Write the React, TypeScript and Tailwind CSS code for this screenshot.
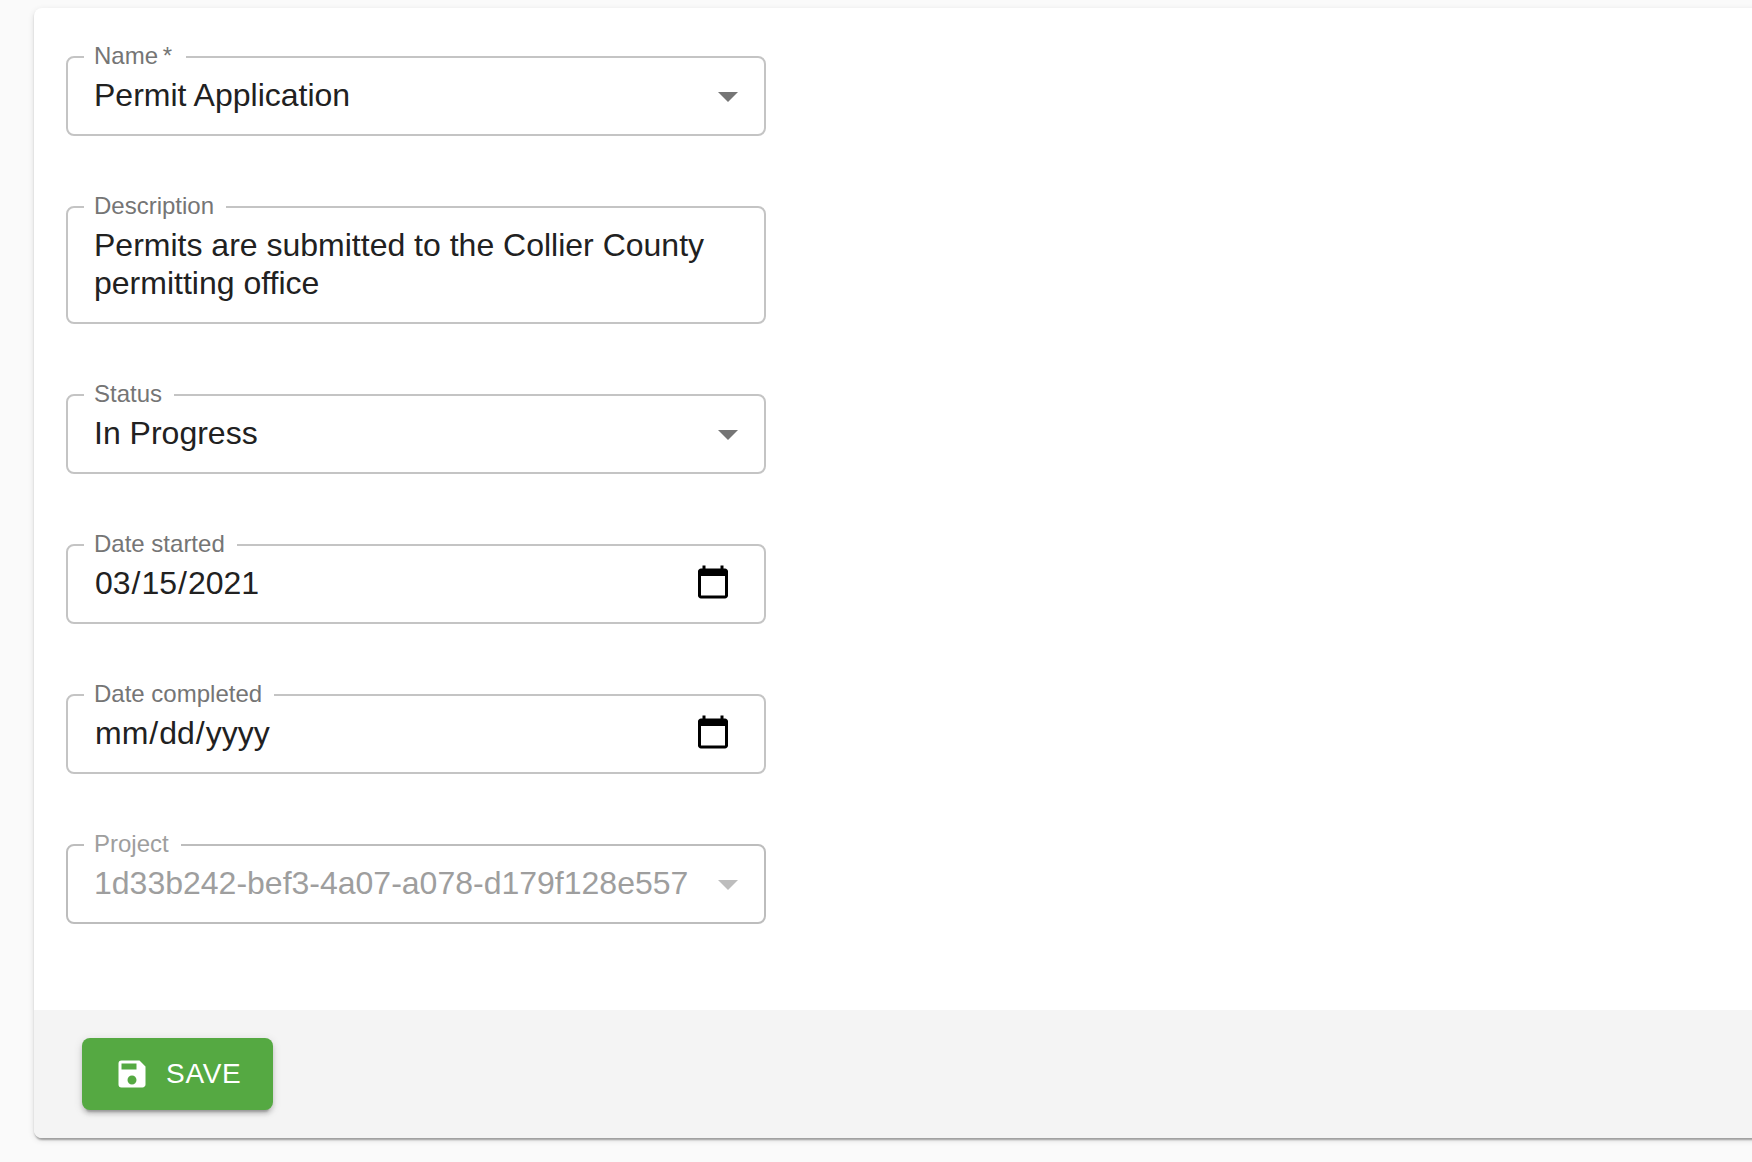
import type { ReactNode } from "react";
import { MdSave } from "react-icons/md";

const controlClass =
  "col-start-1 row-start-1 block w-full bg-transparent pt-1.5 pb-5 pl-[26px] text-[32px] leading-[38px] text-[#212121] outline-none disabled:text-[#9e9e9e] disabled:opacity-100";

type FieldProps = {
  id: string;
  label: string;
  required?: boolean;
  disabled?: boolean;
  children: ReactNode;
};

function Field({ id, label, required, disabled, children }: FieldProps) {
  return (
    <fieldset
      className={
        disabled
          ? "w-full min-w-0 rounded-lg border-2 border-[#bdbdbd] text-[#9e9e9e]"
          : "w-full min-w-0 rounded-lg border-2 border-[#c4c4c4] text-[#757575]"
      }
    >
      <legend className="ml-4 pr-3 pb-0.5 pl-2.5 text-2xl leading-6">
        <label htmlFor={id} className="block">
          {label}
          {required && <span className="pr-0.5">&thinsp;*</span>}
        </label>
      </legend>
      <div className="grid">{children}</div>
    </fieldset>
  );
}

type SelectFieldProps = {
  id: string;
  label: string;
  options: string[];
  required?: boolean;
  disabled?: boolean;
};

function SelectField({ id, label, options, required, disabled }: SelectFieldProps) {
  return (
    <Field id={id} label={label} required={required} disabled={disabled}>
      <select
        id={id}
        required={required}
        disabled={disabled}
        className={`${controlClass} appearance-none pr-14`}
      >
        {options.map((option) => (
          <option key={option}>{option}</option>
        ))}
      </select>
      <svg
        viewBox="0 0 24 24"
        aria-hidden="true"
        className={
          disabled
            ? "pointer-events-none col-start-1 row-start-1 mt-0.5 mr-3 size-12 justify-self-end fill-[#bdbdbd]"
            : "pointer-events-none col-start-1 row-start-1 mt-0.5 mr-3 size-12 justify-self-end fill-[#757575]"
        }
      >
        <path d="M7 10l5 5 5-5z" />
      </svg>
    </Field>
  );
}

function DateField({ id, label, value }: { id: string; label: string; value?: string }) {
  return (
    <Field id={id} label={label}>
      <input
        id={id}
        type="date"
        defaultValue={value}
        className={`${controlClass} pr-8 [&::-webkit-calendar-picker-indicator]:size-[38px] [&::-webkit-calendar-picker-indicator]:p-0`}
      />
    </Field>
  );
}

export default function App() {
  return (
    <div className="min-h-screen overflow-hidden bg-[#fafafa] pt-2 pb-6 pl-[34px] font-['Liberation_Sans',Arial,sans-serif]">
      <form
        onSubmit={(e) => e.preventDefault()}
        className="-mr-4 rounded-lg bg-white shadow-[0_4px_2px_-2px_rgba(0,0,0,0.2),0_2px_2px_0_rgba(0,0,0,0.14),0_2px_6px_0_rgba(0,0,0,0.12)]"
      >
        <div className="px-8 pt-9 pb-[86px]">
          <div className="flex max-w-[700px] flex-col gap-[58px]">
            <SelectField id="name" label="Name" required options={["Permit Application"]} />

            <Field id="description" label="Description">
              <textarea
                id="description"
                rows={2}
                defaultValue="Permits are submitted to the Collier County permitting office"
                className={`${controlClass} resize-none overflow-hidden pr-[26px]`}
              />
            </Field>

            <SelectField id="status" label="Status" options={["In Progress"]} />
            <DateField id="date-started" label="Date started" value="2021-03-15" />
            <DateField id="date-completed" label="Date completed" />
            <SelectField
              id="project"
              label="Project"
              disabled
              options={["1d33b242-bef3-4a07-a078-d179f128e557"]}
            />
          </div>
        </div>

        {/* Toolbar */}
        <div className="flex rounded-b-lg bg-[#f4f4f4] px-12 py-7">
          <button
            type="submit"
            className="flex h-[72px] items-center gap-4 rounded-lg bg-[#55a942] px-8 text-[28px] leading-8 tracking-wide text-white uppercase shadow-[0_6px_2px_-4px_rgba(0,0,0,0.2),0_4px_4px_0_rgba(0,0,0,0.14),0_2px_10px_0_rgba(0,0,0,0.12)]"
          >
            <MdSave className="size-9" aria-hidden="true" />
            Save
          </button>
        </div>
      </form>
    </div>
  );
}
